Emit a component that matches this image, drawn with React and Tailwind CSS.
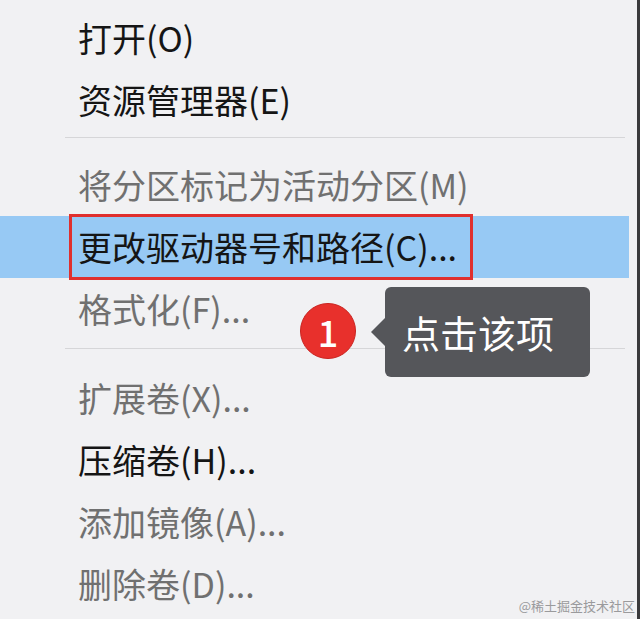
import React from "react";

const font = { fontFamily: '"Noto Sans CJK SC", "Noto Sans", sans-serif' };

function Item({ label, disabled }) {
  return (
    <div
      className={`h-[62px] flex items-center pl-[78px] text-[34px] leading-none ${
        disabled ? "text-[#707070]" : "text-[#151515]"
      }`}
    >
      {label}
    </div>
  );
}

function Separator({ top, bottom }) {
  return (
    <div className={`${top} ${bottom} pl-[65px] pr-[12px]`}>
      <div className="h-px bg-[#d6d6d8]" />
    </div>
  );
}

export default function App() {
  return (
    <div
      className="relative w-[640px] h-[619px] overflow-hidden bg-[#f1f1f3] flex"
      style={font}
    >
      <div className="flex-1 pt-[7px]">
        <Item label="打开(O)" />
        <Item label="资源管理器(E)" />
        <Separator top="mt-[6px]" bottom="mb-[16px]" />
        <Item label="将分区标记为活动分区(M)" disabled />

        {/* highlighted row with the red callout box */}
        <div className="h-[62px] flex items-center bg-[#97c9f4] mr-[8px]">
          <span className="ml-[69px] h-[66px] pl-[6px] pr-[13px] flex items-center border-[3px] border-[#e0302e] text-[34px] leading-none text-[#151515]">
            更改驱动器号和路径(C)...
          </span>
        </div>

        <Item label="格式化(F)..." disabled />
        <Separator top="mt-[8px]" bottom="mb-[18px]" />
        <Item label="扩展卷(X)..." disabled />
        <Item label="压缩卷(H)..." />
        <Item label="添加镜像(A)..." disabled />
        <Item label="删除卷(D)..." disabled />
      </div>
      <div className="w-[3px] bg-[#3a3a3c]" />

      {/* step badge */}
      <div className="absolute left-[300px] top-[303px] w-[56px] h-[56px] rounded-full bg-[#e8302c] border border-[#c92420] flex items-center justify-center text-white text-[36px] font-medium leading-none">
        1
      </div>

      {/* tooltip */}
      <div className="absolute left-[385px] top-[287px] w-[205px] h-[90px] rounded-[6px] bg-[#55565a] flex items-center pl-[17px] text-white text-[38px] leading-none">
        <span className="absolute -left-[14px] top-[30px] w-0 h-0 border-y-[15px] border-y-transparent border-r-[15px] border-r-[#55565a]" />
        点击该项
      </div>

      {/* watermark */}
      <div className="absolute right-[5px] bottom-[7px] text-[13px] leading-none text-[#9a9a9c]">
        @稀土掘金技术社区
      </div>
    </div>
  );
}
